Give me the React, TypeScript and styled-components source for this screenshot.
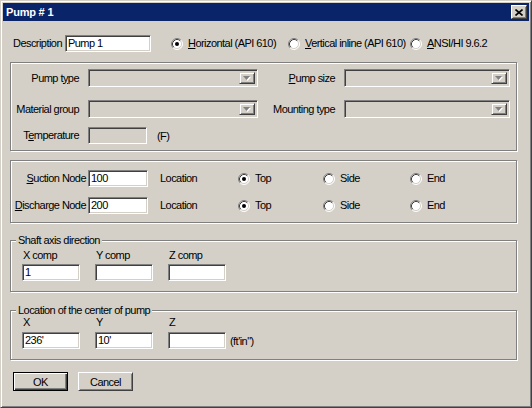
import React from 'react'
import styled, { createGlobalStyle } from 'styled-components'

const FACE = '#d4d0c8'
const SHADOW = '#808080'
const DARK = '#404040'

const GlobalStyle = createGlobalStyle`
  html, body {
    margin: 0;
    padding: 0;
    background: ${FACE};
  }
  body {
    font-family: 'Liberation Sans', Arial, sans-serif;
    font-size: 11px;
  }
`

const Window = styled.div`
  width: 532px;
  height: 408px;
  box-sizing: border-box;
  padding: 2px;
  background: ${FACE};
  border: 1px solid;
  border-color: ${FACE} ${DARK} ${DARK} ${FACE};
  box-shadow: inset 1px 1px #fff, inset -1px -1px ${SHADOW};
  display: flex;
  flex-direction: column;
  color: #000;
  letter-spacing: -0.55px;
`

const TitleBar = styled.div`
  height: 18px;
  flex: none;
  background: #0a246a;
  display: flex;
  align-items: center;
  justify-content: space-between;
  padding: 0 2px 0 3px;
`

const Title = styled.span`
  color: #fff;
  font-weight: bold;
  font-size: 11px;
  letter-spacing: -0.2px;
`

const Raised = styled.div`
  box-sizing: border-box;
  background: ${FACE};
  border: 1px solid;
  border-color: #fff ${DARK} ${DARK} #fff;
  box-shadow: inset 1px 1px ${FACE}, inset -1px -1px ${SHADOW};
  display: flex;
  align-items: center;
  justify-content: center;
`

const CloseButton = styled(Raised)`
  width: 16px;
  height: 14px;
`

const Body = styled.div`
  flex: 1;
  display: flex;
  flex-direction: column;
`

const TopRow = styled.div`
  display: flex;
  align-items: center;
  height: 17px;
  margin: 14px 0 0 10px;
`

const Label = styled.div<{ $w?: number; $pr?: number; $pl?: number; $right?: boolean }>`
  flex: none;
  box-sizing: border-box;
  width: ${(p) => (p.$w ? `${p.$w}px` : 'auto')};
  padding-right: ${(p) => p.$pr ?? 0}px;
  padding-left: ${(p) => p.$pl ?? 0}px;
  text-align: ${(p) => (p.$right ? 'right' : 'left')};
  white-space: nowrap;
  line-height: 13px;
`

const Field = styled.div<{ $w: number; $h?: number; $disabled?: boolean }>`
  flex: none;
  box-sizing: border-box;
  width: ${(p) => p.$w}px;
  height: ${(p) => p.$h ?? 17}px;
  line-height: ${(p) => (p.$h ?? 17) - 2}px;
  padding: 0 2px;
  background: ${(p) => (p.$disabled ? FACE : '#fff')};
  border: 1px solid;
  border-color: ${SHADOW} #fff #fff ${SHADOW};
  box-shadow: inset 1px 1px ${DARK}, inset -1px -1px ${FACE};
  white-space: nowrap;
  overflow: hidden;
`

const Combo = styled(Field)`
  display: flex;
  justify-content: flex-end;
  padding: 2px;
`

const DropButton = styled(Raised)`
  width: 16px;
  height: 100%;
  border-color: ${FACE} ${DARK} ${DARK} ${FACE};
  box-shadow: inset 1px 1px #fff, inset -1px -1px ${SHADOW};
`

const RadioItem = styled.div<{ $w?: number }>`
  flex: none;
  width: ${(p) => (p.$w ? `${p.$w}px` : 'auto')};
  display: flex;
  align-items: center;
  gap: 5px;
  white-space: nowrap;
  line-height: 13px;
`

const Group = styled.div<{ $mt: number; $pt: number; $pb: number }>`
  position: relative;
  box-sizing: border-box;
  width: 507px;
  margin: ${(p) => p.$mt}px 0 0 7px;
  padding: ${(p) => p.$pt}px 0 ${(p) => p.$pb}px 0;
  border: 1px solid ${SHADOW};
  box-shadow: inset 1px 1px #fff, 1px 1px #fff;
  display: flex;
  flex-direction: column;
`

const Legend = styled.div`
  position: absolute;
  top: -7px;
  left: 5px;
  padding: 0 2px;
  background: ${FACE};
  line-height: 13px;
  white-space: nowrap;
`

const FormRow = styled.div<{ $mt?: number }>`
  display: flex;
  align-items: center;
  margin-top: ${(p) => p.$mt ?? 0}px;
`

const Unit = styled.span<{ $ml: number }>`
  margin-left: ${(p) => p.$ml}px;
  white-space: nowrap;
`

const CoordGrid = styled.div<{ $gap: number }>`
  display: grid;
  grid-template-columns: 73px 73px auto;
  row-gap: ${(p) => p.$gap}px;
  padding-left: 11px;
  align-items: center;
`

const CoordLabel = styled.div`
  line-height: 13px;
  padding-left: 1px;
`

const CoordCell = styled.div`
  display: flex;
  align-items: center;
`

const ButtonRow = styled.div`
  display: flex;
  gap: 10px;
  margin: 12px 0 0 10px;
`

const PushButton = styled(Raised)<{ $default?: boolean }>`
  width: 55px;
  height: 19px;
  ${(p) =>
    p.$default &&
    `
    border-color: #000;
    box-shadow: inset 1px 1px #fff, inset -1px -1px ${DARK}, inset -2px -2px ${SHADOW};
  `}
`

const RadioMark = ({ checked }: { checked?: boolean }) => (
  <svg width="12" height="12" viewBox="0 0 12 12">
    <circle cx="6" cy="6" r="5" fill="#fff" />
    <path d="M2.11 9.89 A5.5 5.5 0 0 1 9.89 2.11" fill="none" stroke={SHADOW} />
    <path d="M9.89 2.11 A5.5 5.5 0 0 1 2.11 9.89" fill="none" stroke="#fff" />
    <path d="M2.82 9.18 A4.5 4.5 0 0 1 9.18 2.82" fill="none" stroke={DARK} />
    <path d="M9.18 2.82 A4.5 4.5 0 0 1 2.82 9.18" fill="none" stroke={FACE} />
    {checked && <circle cx="6" cy="6" r="2" fill="#000" />}
  </svg>
)

const Radio = ({
  w,
  checked,
  children,
}: {
  w?: number
  checked?: boolean
  children: React.ReactNode
}) => (
  <RadioItem $w={w}>
    <RadioMark checked={checked} />
    <span>{children}</span>
  </RadioItem>
)

const DisabledArrow = () => (
  <svg width="8" height="5" viewBox="0 0 8 5">
    <path d="M1 1h7l-3.5 4z" fill="#fff" />
    <path d="M0 0h7l-3.5 4z" fill={SHADOW} />
  </svg>
)

const ComboBox = ({ w }: { w: number }) => (
  <Combo $w={w} $h={18} $disabled>
    <DropButton>
      <DisabledArrow />
    </DropButton>
  </Combo>
)

const CloseGlyph = () => (
  <svg width="8" height="7" viewBox="0 0 8 7">
    <path d="M0.5 0.5l7 6M7.5 0.5l-7 6" stroke="#000" strokeWidth="1.6" />
  </svg>
)

const NodeRow = ({ mt, label, value }: { mt?: number; label: React.ReactNode; value: string }) => (
  <FormRow $mt={mt}>
    <Label $w={77} $pr={2} $right>
      {label}
    </Label>
    <Field $w={60}>{value}</Field>
    <Label $w={90} $pl={12}>
      Location
    </Label>
    <Radio w={85} checked>
      Top
    </Radio>
    <Radio w={87}>Side</Radio>
    <Radio>End</Radio>
  </FormRow>
)

export default function App() {
  return (
    <>
      <GlobalStyle />
      <Window>
        <TitleBar>
          <Title>Pump # 1</Title>
          <CloseButton>
            <CloseGlyph />
          </CloseButton>
        </TitleBar>
        <Body>
          <TopRow>
            <Label $w={52}>Description</Label>
            <Field $w={86}>Pump 1</Field>
            <Unit $ml={20} />
            <Radio w={117} checked>
              <u>H</u>orizontal (API 610)
            </Radio>
            <Radio w={122}>
              <u>V</u>ertical inline (API 610)
            </Radio>
            <Radio>
              <u>A</u>NSI/HI 9.6.2
            </Radio>
          </TopRow>

          <Group $mt={10} $pt={6} $pb={6}>
            <FormRow>
              <Label $w={77} $pr={9} $right>
                Pump t<u>y</u>pe
              </Label>
              <ComboBox w={170} />
              <Label $w={86} $pr={9} $right>
                <u>P</u>ump size
              </Label>
              <ComboBox w={166} />
            </FormRow>
            <FormRow $mt={13}>
              <Label $w={77} $pr={9} $right>
                Material <u>g</u>roup
              </Label>
              <ComboBox w={170} />
              <Label $w={86} $pr={9} $right>
                Mounting type
              </Label>
              <ComboBox w={166} />
            </FormRow>
            <FormRow $mt={9}>
              <Label $w={77} $pr={9} $right>
                T<u>e</u>mperature
              </Label>
              <Field $w={59} $disabled />
              <Unit $ml={10}>(F)</Unit>
            </FormRow>
          </Group>

          <Group $mt={9} $pt={9} $pb={8}>
            <NodeRow label={<><u>S</u>uction Node</>} value="100" />
            <NodeRow mt={10} label={<><u>D</u>ischarge Node</>} value="200" />
          </Group>

          <Group $mt={17} $pt={8} $pb={10}>
            <Legend>Shaft axis direction</Legend>
            <CoordGrid $gap={2}>
              <CoordLabel>X comp</CoordLabel>
              <CoordLabel>Y comp</CoordLabel>
              <CoordLabel>Z comp</CoordLabel>
              <CoordCell>
                <Field $w={58}>1</Field>
              </CoordCell>
              <CoordCell>
                <Field $w={58} />
              </CoordCell>
              <CoordCell>
                <Field $w={58} />
              </CoordCell>
            </CoordGrid>
          </Group>

          <Group $mt={18} $pt={5} $pb={10}>
            <Legend>Location of the center of pump</Legend>
            <CoordGrid $gap={3}>
              <CoordLabel>X</CoordLabel>
              <CoordLabel>Y</CoordLabel>
              <CoordLabel>Z</CoordLabel>
              <CoordCell>
                <Field $w={58}>236'</Field>
              </CoordCell>
              <CoordCell>
                <Field $w={58}>10'</Field>
              </CoordCell>
              <CoordCell>
                <Field $w={58} />
                <Unit $ml={4}>(ft'in")</Unit>
              </CoordCell>
            </CoordGrid>
          </Group>

          <ButtonRow>
            <PushButton $default>OK</PushButton>
            <PushButton>Cancel</PushButton>
          </ButtonRow>
        </Body>
      </Window>
    </>
  )
}
